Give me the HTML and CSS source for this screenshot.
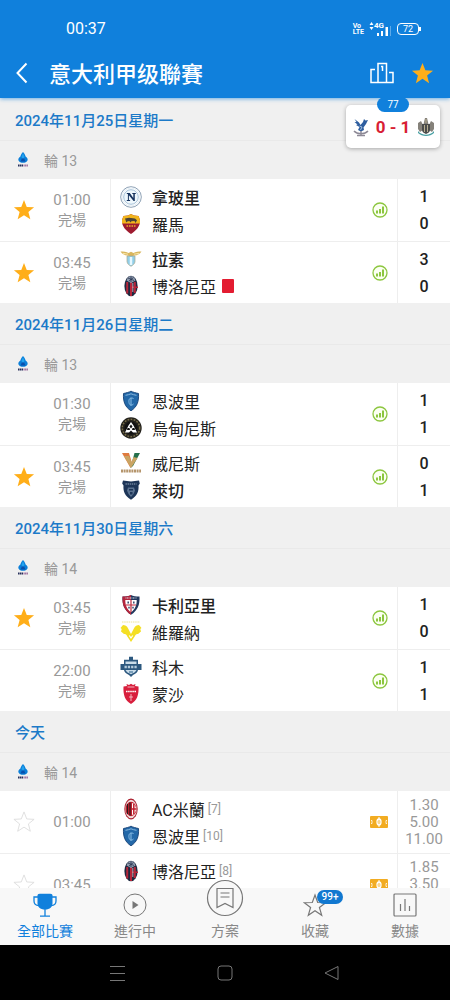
FILE: index.html
```html
<!DOCTYPE html>
<html lang="zh-Hant">
<head>
    <meta charset="UTF-8">
    <meta name="viewport" content="width=device-width, initial-scale=1.0">
    <title>意大利甲级聯賽</title>
    <link rel="stylesheet" href="styles.css">
</head>
<body>
    <!-- 圖標 -->
    <svg class="sprite" aria-hidden="true">
        <symbol id="star" viewBox="0 0 24 24">
            <path d="M12 1l3 7.700 8 .4-6.200 5 2.100 8-6.900-4.500-6.900 4.500 2.100-8-6.200-5 8-.4z"/>
        </symbol>
        <symbol id="chart" viewBox="0 0 16 16">
            <circle cx="8" cy="8" r="7" fill="#fbfff2" stroke="#8cc63f" stroke-width="1.300"/>
            <path d="M5 8.600v3M8 7v4.600M11 4.600v7" stroke="#8cc63f" stroke-width="2"/>
        </symbol>
        <symbol id="pitch" viewBox="0 0 18 12">
            <rect width="18" height="12" rx="1" fill="#f2ac22"/>
            <path d="M1 4.500h1v3h-1M17 4.500h-1v3h1" fill="none" stroke="#fff" stroke-width=".8"/>
            <ellipse cx="9" cy="6" rx="2" ry="3" fill="none" stroke="#fff" stroke-width="1.300"/>
            <path d="M9 1v10" stroke="#fff" stroke-width="1"/>
        </symbol>
        <symbol id="league" viewBox="0 0 14 18">
            <path d="M7 1c1.800 2 2.200 3 2.600 4.400C11.500 6.500 12 8 11.500 9.500 10.800 11.200 9 11.800 7 11.800S3.200 11.200 2.500 9.500C2 8 2.500 6.500 4.400 5.400 4.800 4 5.200 3 7 1z" fill="#0b7fd9"/>
            <path d="M7 5l2.500 5.500h-5z" fill="#0a4fac"/>
            <path d="M7 2l1.500 4L7 8 5.500 6z" fill="#24a4ef"/>
            <path d="M2 14.500h5" stroke="#28315c" stroke-width="2" stroke-dasharray="1.500 .4"/>
            <path d="M7.500 14.500h4.500" stroke="#9a6c9c" stroke-width="2" stroke-dasharray="1.200 .4"/>
        </symbol>
        <symbol id="napoli" viewBox="0 0 22 22">
            <circle cx="11" cy="11" r="10.300" fill="#fff" stroke="#8096ad" stroke-width=".9"/>
            <circle cx="11" cy="11" r="7.300" fill="#eef7fc" stroke="#9dbbd4" stroke-width=".9"/>
            <circle cx="11" cy="11" r="8.900" fill="none" stroke="#e6eff5" stroke-width="1"/>
            <path d="M6.800 7h3l3.500 5V8h-1V7h3.500v1h-1v7h-1.200L8.900 9.300V14h1.200v1H6.800v-1h1.100V8H6.800z" fill="#17335e"/>
        </symbol>
        <symbol id="roma" viewBox="0 0 22 22">
            <path d="M11 1l3 1.500 4.500.5 1.500 4c.5 6.500-4 10.500-9 14C6 17.500 1.500 13.500 2 7l1.500-4L8 2.500z" fill="#9e1b2f"/>
            <path d="M11 1l3 1.500 4.500.5 1.500 4v3.500H2V7l1.500-4L8 2.500z" fill="#f1b51c"/>
            <path d="M5 5.500l4-.8 6 .8 2 1.800-1.500 2.700-1-2-3 .3-1 1.200-1.200-1.500-2 .4-1 1z" fill="#4b4437"/>
            <path d="M6.500 13h9" stroke="#d8862a" stroke-width="1.800" stroke-dasharray="1.600 .9"/>
        </symbol>
        <symbol id="lazio" viewBox="0 0 22 22">
            <path d="M.5 3.500c3 0 6 .2 8 1.500L11 3.800 13.500 5c2-1.300 5-1.500 8-1.500-1.500 2.500-4.500 4-8 4.300L11 9 8.500 7.800C5 7.500 2 6 .5 3.500z" fill="#d9b65e"/>
            <path d="M3 5.300l5 .9M19 5.300l-5 .9" stroke="#fff1ba" stroke-width=".8"/>
            <path d="M7 8h8v5.500c0 2.300-2.300 3.700-4 4.800-1.700-1.100-4-2.500-4-4.800z" fill="#90cee9" stroke="#a9a78e" stroke-width=".7"/>
            <path d="M11 9v8" stroke="#e7f8ff" stroke-width="2.500"/>
        </symbol>
        <symbol id="bologna" viewBox="0 0 22 22">
            <ellipse cx="11" cy="11" rx="6.600" ry="10.300" fill="#1d2940"/>
            <path d="M7.200 7v11.500M11 7v14M14.800 7v11" stroke="#b4263a" stroke-width="2"/>
            <path d="M6.500 5.500C7.500 2.500 9 1 11 1s3.500 1.500 4.500 4.500L11 8z" fill="#8e9bae"/>
            <path d="M8 3l6 2.500M13.500 2.500L9 6M11 1v6" stroke="#27344f" stroke-width=".8"/>
            <path d="M12 11.500h6v1.500h-6z" fill="#b4263a"/>
            <path d="M12.800 8v9" stroke="#e3c4ca" stroke-width=".8"/>
        </symbol>
        <symbol id="empoli" viewBox="0 0 22 22">
            <path d="M3.500 3.500C6 3 9 2.200 11 1.200c2 1 5 1.800 7.500 2.300.5 8-1.500 13.500-7.500 17.300C5 17 3 11.500 3.500 3.500z" fill="#2368a8" stroke="#143f75" stroke-width=".9"/>
            <path d="M5.500 5.300c2-.2 4-.9 5.500-1.500 1.500.6 3.500 1.300 5.500 1.500" fill="none" stroke="#8ab8de" stroke-width="1"/>
            <path d="M13.500 8.500c-3.500-1.500-5 .5-4.500 4s3 3 4.500 1.500M11 8v7.500" fill="none" stroke="#8cc0e8" stroke-width="1"/>
        </symbol>
        <symbol id="udinese" viewBox="0 0 22 22">
            <circle cx="11" cy="11" r="10.700" fill="#24221d"/>
            <circle cx="11" cy="11" r="8.700" fill="none" stroke="#746b46" stroke-width="1.500" stroke-dasharray="1.800 1.300"/>
            <circle cx="11" cy="11" r="6.500" fill="#111"/>
            <path d="M11 5l2.500 3.500 3.500 7H13l-2-2-2 2H5l3.500-7z" fill="#fff"/>
            <path d="M11 7.500l1.500 2L11 11.500l-1.500-2zM7.500 11h2l.5 2H7zM12.500 11h2l.5 2h-3z" fill="#111"/>
        </symbol>
        <symbol id="venezia" viewBox="0 0 22 22">
            <path d="M2 1h7l2.500 8.500-1 6.500z" fill="#df7b3f"/>
            <path d="M20 1h-5.500l-4 15 2.500-2z" fill="#24704c"/>
            <path d="M4 4l7 12 6.500-10-4-1-2 5L9 4z" fill="#c9a463"/>
            <path d="M1 19h20" stroke="#b5956c" stroke-width="3" stroke-dasharray="2 .6"/>
        </symbol>
        <symbol id="lecce" viewBox="0 0 22 22">
            <path d="M3 1.500L11 2.500l8-1 .8 3-1.300 2c.5 6-1.500 10.500-7.500 14.300C5 17 3 12.500 3.500 6.500l-1.300-2z" fill="#1d3557"/>
            <path d="M5.500 5h11" stroke="#6c809a" stroke-width="1.300" stroke-dasharray="1.400 .7"/>
            <path d="M8 8.500h6l1 3-1.500 3.500-2.500 3-2.500-3L7 11.500z" fill="#5b7290"/>
            <path d="M9 10h4v1.500H9zM10 13h2.500v2.500H10z" fill="#1d3557"/>
        </symbol>
        <symbol id="cagliari" viewBox="0 0 22 22">
            <path d="M2.500 2.500C6 2.500 9 2 11 1c2 1 5 1.500 8.500 1.500.5 8.500-2 14-8.500 18.300C4.500 16.500 2 11 2.500 2.500z" fill="#21375d"/>
            <path d="M2.500 2.500C6 2.500 9 2 11 1v19.800C4.500 16.500 2 11 2.500 2.500z" fill="#b5253c"/>
            <path d="M5.300 6h11.400c.1 6-2 9.500-5.700 12.300C7.300 15.500 5.200 12 5.300 6z" fill="#fff"/>
            <path d="M11 6v12M6 11h10" stroke="#bb2b3d" stroke-width="1.200"/>
            <path d="M8.200 7.500v2M13.800 7.500v2M9 12.800v1.800M13 12.800v1.800" stroke="#33496f" stroke-width="1.500"/>
            <path d="M5.500 4h11" stroke="#d8dce6" stroke-width="1" stroke-dasharray="1 .5"/>
        </symbol>
        <symbol id="verona" viewBox="0 0 22 22">
            <path d="M2 1h18" stroke="#eee596" stroke-width="1" stroke-dasharray="1.500 .7"/>
            <path d="M3 4c2 0 4 .8 5 3.200L11 13l3-5.800C15 4.800 17 4 19 4l2.500 3-1.200 1L21 10.500l-3 2.500c-1.500 0-2.500.5-3 2l-4 6-4-6c-.5-1.500-1.500-2-3-2l-3-2.500L1.700 8 .5 7z" fill="#f4df24"/>
            <path d="M9.300 14.500L11 17l1.700-2.500" fill="none" stroke="#fff" stroke-width="1.200"/>
        </symbol>
        <symbol id="como" viewBox="0 0 22 22">
            <path d="M9 .8h4v3h5V8h3.500v6H18c-.5 2.500-2.500 3.500-5 5l-2 2-2-2c-2.500-1.500-4.500-2.500-5-5H.5V8H4V3.800h5z" fill="#2c587f"/>
            <path d="M5.500 5.500h11V8h-11zM5.500 14h11c-.7 2-3 3-5.500 4.200C8.500 17 6.200 16 5.500 14z" fill="#c9dce9"/>
            <path d="M4.500 11h13" stroke="#b4cbdc" stroke-width="2.500" stroke-dasharray="2.300 1"/>
            <path d="M9 16h4" stroke="#45759a" stroke-width="1.200"/>
        </symbol>
        <symbol id="monza" viewBox="0 0 22 22">
            <path d="M7 3l-.5-2 2.500 1L11 .8 13 2l2.500-1L15 3l3.500.5C19 12 17 17.500 11 21 5 17.500 3 12 3.500 3.500z" fill="#d81f3d"/>
            <path d="M6 8.500h10" stroke="#fff" stroke-width="1.700" stroke-dasharray="1.600 .5"/>
            <path d="M11 11v7M9 14h4M7.500 4h7" stroke="#f7c4cc" stroke-width=".9"/>
        </symbol>
        <symbol id="milan" viewBox="0 0 22 22">
            <ellipse cx="11" cy="11" rx="6.700" ry="10.400" fill="#a91c2c"/>
            <ellipse cx="11" cy="11" rx="5.800" ry="9.200" fill="#f0dcdc"/>
            <ellipse cx="11" cy="11" rx="5.500" ry="7.200" fill="#c2202f"/>
            <path d="M7.500 6v10M10 4.500v13" stroke="#2a1a1c" stroke-width="1.200"/>
            <path d="M12 5v12c2.500-.8 4-3 4-6s-1.500-5.200-4-6z" fill="#fff"/>
            <path d="M13.800 6v10M11.500 11h4.700" stroke="#c2202f" stroke-width="1.500"/>
        </symbol>
    </svg>

    <header class="header">
        <div class="status-bar">
            <span class="clock">00:37</span>
            <div class="status-icons">
                <span class="volte"><span>Vo</span><span>LTE</span></span>
                <div class="signal">
                    <svg width="5" height="8" viewBox="0 0 5 8"><path d="M2.500 0l2 3h-4zM2.500 8l2-3h-4z" fill="#fff"/></svg>
                    <span class="network">4G</span>
                    <svg width="15" height="10" viewBox="0 0 15 10"><path d="M1 10V7h2v3zM5 10V5h2v5zM9.500 10V1H12v9z" fill="#fff"/><path d="M14.500 0v10" stroke="#5eaae9"/></svg>
                </div>
                <span class="battery">72</span>
            </div>
        </div>
        <div class="title-bar">
            <button class="icon-btn back" aria-label="返回">
                <svg width="14" height="22" viewBox="0 0 14 22"><path d="M11.500 1.500L2.500 11l9 9.500" fill="none" stroke="#fff" stroke-width="2"/></svg>
            </button>
            <h1>意大利甲级聯賽</h1>
            <button class="icon-btn" aria-label="積分榜">
                <svg width="24" height="22" viewBox="0 0 24 22" fill="none" stroke="#fff" stroke-width="1.500"><path d="M5 7.500H1v13h22v-10h-4M8 20.500V1.500h8.500v19"/><path d="M11 4.500h1.500V9"/></svg>
            </button>
            <button class="icon-btn" aria-label="收藏聯賽">
                <svg class="star on" width="23" height="23"><use href="#star"/></svg>
            </button>
        </div>
    </header>

    <!-- 懸浮比分 -->
    <a class="live-card" href="#live">
        <span class="minute">77</span>
        <svg width="16" height="20" viewBox="0 0 16 20">
            <path d="M1.500 2l4.500 3.500L7.500 8 10 5l1-3 1.500 1.500L15 3l-2 4-2.500 3.500L11 13l-3 1.500L5 13l1.500-3L3 8l1.500-.5L1.500 5l2 0z" fill="#2e5e9f"/>
            <path d="M6.500 9l2.500 1-1.500 3" fill="none" stroke="#a4bfde" stroke-width="1"/>
            <path d="M1 14c3 3.500 11 3.500 14 0M8 14v4M4 18.500h8" fill="none" stroke="#8d8996" stroke-width="1.400"/>
        </svg>
        <strong>0 - 1</strong>
        <svg width="18" height="20" viewBox="0 0 18 20">
            <path d="M7 5l1-4h2l1 4 1 5H6zM1 6l3-2 2 4v5l-3 2-2-3zM17 6l-3-2-2 4v5l3 2 2-3z" fill="#85817a"/>
            <path d="M5 7h8v6c0 2-2 3-4 4-2-1-4-2-4-4z" fill="#4b4c4b"/>
            <path d="M7.500 8v7M10.500 8v7M9 2v4" stroke="#b7ae91" stroke-width="1"/>
            <path d="M1 14c4 5 12 5 16 0v2c-4 4-12 4-16 0z" fill="#48a0a3"/>
        </svg>
    </a>

    <main class="matches">
        <section>
            <h2>2024年11月25日星期一</h2>
            <div class="round"><svg width="14" height="18"><use href="#league"/></svg>輪 13</div>
            <article class="match">
                <button class="fav" aria-label="取消收藏"><svg class="star on" width="22" height="22"><use href="#star"/></svg></button>
                <div class="time"><span>01:00</span><span>完場</span></div>
                <div class="teams">
                    <div class="team win"><svg><use href="#napoli"/></svg>拿玻里</div>
                    <div class="team"><svg><use href="#roma"/></svg>羅馬</div>
                </div>
                <svg class="chart"><use href="#chart"/></svg>
                <div class="score"><span>1</span><span>0</span></div>
            </article>
            <article class="match">
                <button class="fav" aria-label="取消收藏"><svg class="star on" width="22" height="22"><use href="#star"/></svg></button>
                <div class="time"><span>03:45</span><span>完場</span></div>
                <div class="teams">
                    <div class="team win"><svg><use href="#lazio"/></svg>拉素</div>
                    <div class="team"><svg><use href="#bologna"/></svg>博洛尼亞<i class="red-card"></i></div>
                </div>
                <svg class="chart"><use href="#chart"/></svg>
                <div class="score"><span>3</span><span>0</span></div>
            </article>
        </section>

        <section>
            <h2>2024年11月26日星期二</h2>
            <div class="round"><svg width="14" height="18"><use href="#league"/></svg>輪 13</div>
            <article class="match">
                <span class="fav"></span>
                <div class="time"><span>01:30</span><span>完場</span></div>
                <div class="teams">
                    <div class="team"><svg><use href="#empoli"/></svg>恩波里</div>
                    <div class="team"><svg><use href="#udinese"/></svg>烏甸尼斯</div>
                </div>
                <svg class="chart"><use href="#chart"/></svg>
                <div class="score"><span>1</span><span>1</span></div>
            </article>
            <article class="match">
                <button class="fav" aria-label="取消收藏"><svg class="star on" width="22" height="22"><use href="#star"/></svg></button>
                <div class="time"><span>03:45</span><span>完場</span></div>
                <div class="teams">
                    <div class="team"><svg><use href="#venezia"/></svg>威尼斯</div>
                    <div class="team win"><svg><use href="#lecce"/></svg>萊切</div>
                </div>
                <svg class="chart"><use href="#chart"/></svg>
                <div class="score"><span>0</span><span>1</span></div>
            </article>
        </section>

        <section>
            <h2>2024年11月30日星期六</h2>
            <div class="round"><svg width="14" height="18"><use href="#league"/></svg>輪 14</div>
            <article class="match">
                <button class="fav" aria-label="取消收藏"><svg class="star on" width="22" height="22"><use href="#star"/></svg></button>
                <div class="time"><span>03:45</span><span>完場</span></div>
                <div class="teams">
                    <div class="team win"><svg><use href="#cagliari"/></svg>卡利亞里</div>
                    <div class="team"><svg><use href="#verona"/></svg>維羅納</div>
                </div>
                <svg class="chart"><use href="#chart"/></svg>
                <div class="score"><span>1</span><span>0</span></div>
            </article>
            <article class="match">
                <span class="fav"></span>
                <div class="time"><span>22:00</span><span>完場</span></div>
                <div class="teams">
                    <div class="team"><svg><use href="#como"/></svg>科木</div>
                    <div class="team"><svg><use href="#monza"/></svg>蒙沙</div>
                </div>
                <svg class="chart"><use href="#chart"/></svg>
                <div class="score"><span>1</span><span>1</span></div>
            </article>
        </section>

        <section>
            <h2>今天</h2>
            <div class="round"><svg width="14" height="18"><use href="#league"/></svg>輪 14</div>
            <article class="match">
                <button class="fav" aria-label="收藏"><svg class="star" width="22" height="22"><use href="#star"/></svg></button>
                <div class="time"><span>01:00</span></div>
                <div class="teams">
                    <div class="team"><svg><use href="#milan"/></svg>AC米蘭<small>[7]</small></div>
                    <div class="team"><svg><use href="#empoli"/></svg>恩波里<small>[10]</small></div>
                </div>
                <svg class="pitch"><use href="#pitch"/></svg>
                <div class="odds"><span>1.30</span><span>5.00</span><span>11.00</span></div>
            </article>
            <article class="match">
                <button class="fav" aria-label="收藏"><svg class="star" width="22" height="22"><use href="#star"/></svg></button>
                <div class="time"><span>03:45</span></div>
                <div class="teams">
                    <div class="team"><svg><use href="#bologna"/></svg>博洛尼亞<small>[8]</small></div>
                    <div class="team"></div>
                </div>
                <svg class="pitch"><use href="#pitch"/></svg>
                <div class="odds"><span>1.85</span><span>3.50</span><span></span></div>
            </article>
        </section>
    </main>

    <nav class="tabs">
        <a class="active" href="#all">
            <svg width="24" height="24" viewBox="0 0 24 24"><path d="M4.500 2Q5 .8 7 .8h10q2 0 2.500 1.200v8c0 4-2.500 6.500-7.500 6.500S4.500 14 4.500 10z" fill="#1080dc"/><path d="M5 4H1v4c0 3 2 4.500 5 4.700M19 4h4v4c0 3-2 4.500-5 4.700M12 16v7M7 23.200h10" fill="none" stroke="#1080dc" stroke-width="1.300"/></svg>
            <span>全部比賽</span>
        </a>
        <a href="#live">
            <svg width="24" height="24" viewBox="0 0 24 24"><circle cx="12" cy="12" r="11" fill="none" stroke="#777"/><path d="M9.500 8l6 4-6 4z" fill="#777"/></svg>
            <span>進行中</span>
        </a>
        <a class="plan" href="#plan">
            <svg width="38" height="38" viewBox="0 0 38 38"><circle cx="19" cy="19" r="17.500" fill="#f8f8f8" stroke="#777" stroke-width="1.200"/><path d="M11 9.500h16v19l-8-4-8 4zM14.500 14h9M14.500 18h9" fill="none" stroke="#777" stroke-width="1.200"/></svg>
            <span>方案</span>
        </a>
        <a href="#favorites">
            <svg width="24" height="24" viewBox="0 0 24 24"><path d="M12 2l2.700 7.500 8 .2-6.300 4.800 2.300 7.700L12 17.700l-6.700 4.500 2.300-7.700L1.300 9.700l8-.2z" fill="none" stroke="#777" stroke-width="1.200"/></svg>
            <span>收藏</span>
            <b class="badge">99+</b>
        </a>
        <a href="#data">
            <svg width="24" height="24" viewBox="0 0 24 24" fill="none" stroke="#777" stroke-width="1.200"><rect x="1" y="1" width="22" height="22" rx="1"/><path d="M7.500 11v7M12 6v12M16.500 13v5"/></svg>
            <span>數據</span>
        </a>
    </nav>

    <div class="system-bar">
        <button class="icon-btn" aria-label="最近任務"><svg width="18" height="18" viewBox="0 0 18 18"><path d="M1 2.500h15M1 9.500h15M1 16.500h15" stroke="#777"/></svg></button>
        <button class="icon-btn" aria-label="主頁"><svg width="18" height="18" viewBox="0 0 18 18"><rect x="2" y="2" width="14" height="14" rx="3" fill="none" stroke="#777"/></svg></button>
        <button class="icon-btn" aria-label="返回上頁"><svg width="18" height="18" viewBox="0 0 18 18"><path d="M15 2.500v13L2 9z" fill="none" stroke="#777" stroke-linejoin="round"/></svg></button>
    </div>
</body>
</html>
```
FILE: styles.css
```css
* {
    box-sizing: border-box;
}
body {
    margin: 0;
    height: 100vh;
    display: flex;
    flex-direction: column;
    position: relative;
    background: #fff;
    color: #222;
    font-family: Roboto, "Noto Sans CJK TC", sans-serif;
    font-size: 15px;
}
button {
    border: 0;
    padding: 0;
    background: none;
}
a {
    color: inherit;
    text-decoration: none;
}
svg {
    display: block;
    flex: none;
}
.sprite {
    position: absolute;
    width: 0;
    height: 0;
}

/* 頂部 */
.header {
    position: relative;
    flex: none;
    background: #1080dc;
    color: #fff;
    box-shadow: 0 1px 4px rgba(16, 128, 220, 0.6);
}
.status-bar {
    display: flex;
    justify-content: space-between;
    align-items: center;
    padding: 18px 31px 8px 66px;
    line-height: 22px;
}
.clock {
    font-size: 16px;
}
.status-icons {
    display: flex;
    align-items: center;
    gap: 5px;
}
.volte {
    display: flex;
    flex-direction: column;
    font-size: 7px;
    font-weight: 700;
    line-height: 6px;
}
.signal {
    display: flex;
    align-items: flex-end;
}
.signal svg:first-child {
    align-self: flex-start;
}
.network {
    align-self: flex-start;
    font-size: 8px;
    font-weight: 700;
    line-height: 8px;
    margin-right: -8px;
}
.signal svg:last-child {
    margin-top: 4px;
}
.battery {
    position: relative;
    width: 22px;
    margin-left: 1px;
    border: 1px solid #fff;
    border-radius: 4px;
    font-size: 9px;
    line-height: 10px;
    text-align: center;
}
.battery::after {
    content: "";
    position: absolute;
    right: -3px;
    top: 3px;
    width: 2px;
    height: 4px;
    background: #fff;
}
.title-bar {
    display: flex;
    align-items: center;
    height: 50px;
    padding: 0 16px 0 12px;
    gap: 17px;
}
.title-bar h1 {
    flex: 1;
    margin: 0;
    padding-bottom: 3px;
    font-size: 22px;
    font-weight: 500;
}
.back {
    width: 20px;
}

/* 懸浮比分 */
.live-card {
    position: absolute;
    top: 105px;
    right: 10px;
    width: 94px;
    height: 43px;
    display: flex;
    align-items: center;
    justify-content: space-between;
    padding: 0 5px 0 7px;
    border-radius: 5px;
    background: #fff;
    box-shadow: 0 1px 4px rgba(0, 0, 0, 0.3);
    color: #d81e35;
    z-index: 1;
}
.live-card strong {
    font-size: 17px;
    font-weight: 700;
    white-space: nowrap;
}
.minute {
    position: absolute;
    top: -8px;
    left: 31px;
    width: 32px;
    border-radius: 8px;
    background: #1080dc;
    color: #fff;
    font-size: 10px;
    line-height: 15px;
    text-align: center;
}

/* 賽程 */
.matches {
    flex: 1;
    min-height: 0;
    overflow: hidden;
    padding-top: 1px;
    background: #f0f0f0;
}
.matches h2 {
    margin: 0;
    padding: 4px 0 0 15px;
    border-bottom: 1px solid #e9e9e9;
    color: #1c7ac8;
    font-size: 15px;
    font-weight: 500;
    line-height: 37px;
}
.round {
    display: flex;
    align-items: center;
    gap: 14px;
    height: 38px;
    padding-left: 16px;
    color: #999;
    font-size: 14px;
}
.match {
    display: grid;
    grid-template-columns: 48px 48px 15px 1fr 36px 53px;
    height: 62px;
    background: #fff;
}
.match + .match {
    border-top: 1px solid #eee;
}
.fav {
    display: flex;
    align-items: center;
    justify-content: center;
}
.star {
    fill: none;
    stroke: #ddd;
}
.star.on {
    fill: #ffae19;
    stroke: none;
}
.time {
    display: flex;
    flex-direction: column;
    justify-content: center;
    text-align: center;
    color: #999;
    line-height: 20px;
}
.time span + span {
    font-size: 14px;
}
.teams {
    grid-column: 4;
    display: flex;
    flex-direction: column;
    justify-content: center;
    border-left: 1px solid #eee;
    margin-left: -1px;
    padding-left: 9px;
}
.team {
    display: flex;
    align-items: center;
    height: 27px;
    font-size: 16px;
    white-space: nowrap;
}
.team svg {
    width: 22px;
    height: 22px;
    margin-right: 10px;
}
.team small {
    margin-left: 3px;
    color: #999;
    font-size: 12px;
}
.win {
    font-weight: 500;
}
.red-card {
    width: 12px;
    height: 14px;
    margin-left: 6px;
    border-radius: 1px;
    background: #e31c31;
}
.chart {
    width: 16px;
    height: 16px;
    margin-left: 11px;
    align-self: center;
}
.pitch {
    width: 18px;
    height: 12px;
    margin-left: 9px;
    align-self: center;
}
.score,
.odds {
    display: flex;
    flex-direction: column;
    justify-content: center;
    border-left: 1px solid #eee;
    text-align: center;
}
.score {
    font-size: 16px;
    font-weight: 500;
    line-height: 27px;
}
.odds {
    color: #999;
    line-height: 17px;
}
.odds span {
    min-height: 17px;
}

/* 底部導航 */
.tabs {
    position: relative;
    flex: none;
    display: grid;
    grid-template-columns: repeat(5, 1fr);
    height: 57px;
    background: #f8f8f8;
    color: #888;
    font-size: 14px;
    line-height: 20px;
}
.tabs a {
    position: relative;
    display: flex;
    flex-direction: column;
    align-items: center;
    gap: 4px;
    padding-top: 5px;
}
.tabs .active {
    color: #1080dc;
}
.plan svg {
    margin-top: -14px;
}
.badge {
    position: absolute;
    top: 2px;
    left: 50%;
    width: 26px;
    margin-left: 2px;
    border-radius: 8px;
    background: #1178d0;
    color: #fff;
    font-size: 10px;
    font-weight: 500;
    line-height: 14px;
    text-align: center;
}
.system-bar {
    flex: none;
    display: grid;
    grid-template-columns: repeat(3, 1fr);
    height: 55px;
    padding: 0 64px;
    background: #000;
}
.icon-btn {
    display: flex;
    align-items: center;
    justify-content: center;
}
```
